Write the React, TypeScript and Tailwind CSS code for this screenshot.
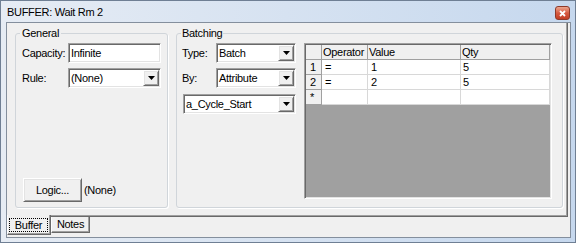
import React from 'react';

const sunken =
  'border border-t-[#a0a0a0] border-l-[#a0a0a0] border-r-white border-b-white shadow-[inset_1px_1px_0_#696969,inset_-1px_-1px_0_#e3e3e3]';
const raised =
  'border border-t-white border-l-white border-r-[#696969] border-b-[#696969] shadow-[inset_1px_1px_0_#e3e3e3,inset_-1px_-1px_0_#a0a0a0] bg-[#f0f0f0]';

const Arrow = () => (
  <svg width="7" height="4" viewBox="0 0 7 4">
    <path d="M0 0h7L3.5 4z" fill="#000" />
  </svg>
);

const Dropdown = ({ value, className }: { value: string; className: string }) => (
  <div className={`flex h-[20px] bg-white p-[1px] ${sunken} ${className}`}>
    <span className="flex-1 pl-[1px] leading-[16px] truncate">{value}</span>
    <div className={`w-[16px] h-[16px] flex items-center justify-center ${raised}`}>
      <Arrow />
    </div>
  </div>
);

const rows = [
  { head: '1', op: '=', value: '1', qty: '5' },
  { head: '2', op: '=', value: '2', qty: '5' },
  { head: '*', op: '', value: '', qty: '' },
];

const App: React.FC = () => {
  return (
    <div className="w-[576px] h-[243px] flex flex-col border border-[#6f7f94] bg-linear-to-r from-[#e6ecf4] to-[#c6d8ee] font-['Liberation_Sans',Arial,sans-serif] text-[11px] leading-[14px] tracking-[-0.3px] text-black">
      {/* Title bar */}
      <div className="h-[21px] flex items-start justify-between pl-[6px] pr-[5px]">
        <span className="mt-[4px]">BUFFER: Wait Rm 2</span>
        <div className="mt-[5px] w-[15px] h-[14px] rounded-[3px] border border-[#8e3a2a] bg-linear-to-b from-[#eba58f] via-[#d65a40] to-[#c23c22] flex items-center justify-center">
          <svg width="7" height="7" viewBox="0 0 7 7">
            <path d="M1 1l5 5M6 1L1 6" stroke="#fff" strokeWidth="1.8" />
          </svg>
        </div>
      </div>

      {/* Client area */}
      <div className="flex-1 ml-[5px] mr-[4px] mb-[4px] border border-[#848f9d] bg-[#f0f0f0] flex flex-col">
        {/* Tab page */}
        <div className="h-[194px] mr-[2px] border-r border-b border-r-[#696969] border-b-[#696969] shadow-[inset_0_-1px_0_#a0a0a0,inset_-1px_0_0_#a0a0a0]">
          <div className="flex gap-[8px] pl-[8px] pt-[3px]">
            {/* General */}
            <fieldset className="w-[153px] h-[182px] min-w-0 p-0 border border-[#d0d5da] rounded-[3px] shadow-[1px_1px_0_#fff]">
              <legend className="ml-[4px] px-[2px] leading-[14px]">General</legend>
              <div className="h-[167px] flex flex-col pl-[6px] pt-[3px] pb-[5px]">
                <div className="flex items-center">
                  <span className="w-[46px]">Capacity:</span>
                  <div className={`w-[93px] h-[20px] bg-white p-[1px] ${sunken}`}>
                    <span className="pl-[1px] leading-[16px]">Infinite</span>
                  </div>
                </div>
                <div className="flex items-center mt-[5px]">
                  <span className="w-[46px]">Rule:</span>
                  <Dropdown value="(None)" className="w-[93px]" />
                </div>
                <div className="mt-auto flex items-center gap-[2px] pl-[1px]">
                  <button className={`w-[59px] h-[24px] text-[11px] tracking-[-0.3px] ${raised}`}>Logic...</button>
                  <span>(None)</span>
                </div>
              </div>
            </fieldset>

            {/* Batching */}
            <fieldset className="w-[387px] h-[182px] min-w-0 p-0 border border-[#d0d5da] rounded-[3px] shadow-[1px_1px_0_#fff]">
              <legend className="ml-[4px] px-[1px] leading-[14px]">Batching</legend>
              <div className="h-[167px] flex pl-[5px] pt-[3px]">
                <div className="w-[114px] flex flex-col">
                  <div className="flex items-center">
                    <span className="w-[34px]">Type:</span>
                    <Dropdown value="Batch" className="w-[80px]" />
                  </div>
                  <div className="flex items-center mt-[5px]">
                    <span className="w-[34px]">By:</span>
                    <Dropdown value="Attribute" className="w-[80px]" />
                  </div>
                  <Dropdown value="a_Cycle_Start" className="w-[113px] ml-[1px] mt-[6px]" />
                </div>

                {/* Grid */}
                <div className={`ml-[8px] w-[248px] h-[156px] bg-[#a0a0a0] p-[1px] ${sunken}`}>
                  <div className="flex h-[15px]">
                    <div className="w-[16px] bg-[#f0f0f0] border-r border-b border-[#a0a0a0]" />
                    <div className="w-[46px] bg-[#f0f0f0] border-r border-b border-[#a0a0a0] pl-[1px] leading-[14px] whitespace-nowrap overflow-hidden">Operator</div>
                    <div className="w-[93px] bg-[#f0f0f0] border-r border-b border-[#a0a0a0] pl-[1px] leading-[14px]">Value</div>
                    <div className="w-[89px] bg-[#f0f0f0] border-r border-b border-[#a0a0a0] pl-[1px] leading-[14px]">Qty</div>
                  </div>
                  {rows.map((r) => (
                    <div key={r.head} className="flex h-[15px]">
                      <div className="w-[16px] bg-[#f0f0f0] border-r border-b border-[#a0a0a0] pl-[4px] leading-[14px]">{r.head}</div>
                      <div className="w-[46px] bg-white border-r border-b border-[#d8d8d8] pl-[3px] leading-[14px]">{r.op}</div>
                      <div className="w-[93px] bg-white border-r border-b border-[#d8d8d8] pl-[3px] leading-[14px]">{r.value}</div>
                      <div className="w-[89px] bg-white border-r border-b border-[#d8d8d8] pl-[2px] leading-[14px]">{r.qty}</div>
                    </div>
                  ))}
                </div>
              </div>
            </fieldset>
          </div>
        </div>

        {/* Tabs */}
        <div className="flex items-start">
          <div className="relative -mt-[2px] w-[44px] h-[20px] bg-[#f0f0f0] border-l border-l-white border-r border-b border-r-[#696969] border-b-[#696969] shadow-[inset_-1px_-1px_0_#a0a0a0] pl-[1px] pr-[2px] pt-[3px] pb-[2px] flex">
            <div className="flex-1 border border-dotted border-black flex items-center justify-center leading-[13px]">Buffer</div>
          </div>
          <div className="w-[39px] h-[16px] bg-[#f0f0f0] border-l border-l-white border-r border-b border-r-[#696969] border-b-[#696969] shadow-[inset_-1px_-1px_0_#a0a0a0] flex items-center justify-center leading-[13px]">
            Notes
          </div>
        </div>
      </div>
    </div>
  );
};

export default App;
